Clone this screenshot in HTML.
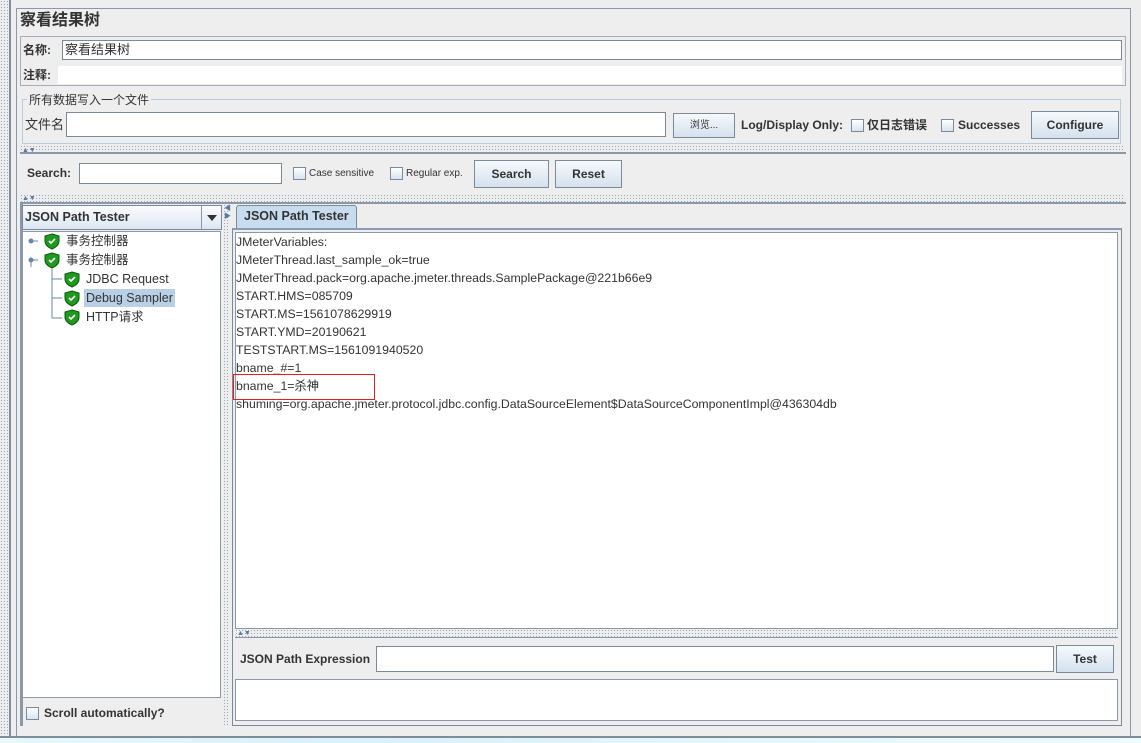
<!DOCTYPE html><html><head><meta charset="utf-8"><style>
*{box-sizing:border-box}
body{margin:0;width:1141px;height:743px;background:#eeeeee;position:relative;overflow:hidden;font-family:"Liberation Sans","Noto Sans CJK SC",sans-serif;font-size:12px;color:#333;line-height:15px}
.a{position:absolute}
.in{position:absolute;background:#fff;border:1px solid #7a8a99}
.btn{position:absolute;border:1px solid #7a8a99;background:linear-gradient(#f6f9fc,#d4e1ee);font-weight:bold;font-size:12px;text-align:center;color:#333}
.cb{position:absolute;width:13px;height:13px;border:1px solid #7a8a99;background:linear-gradient(#fff,#d8e4f0)}
.dots{position:absolute;background-image:radial-gradient(#9aa8b8 0.6px,transparent 0.8px);background-size:3px 3px}
.b{font-weight:bold}
.ln{position:absolute;left:236px;font-size:12.3px;color:#333}
</style></head><body>
<div class="dots" style="left:0;top:0;width:8px;height:743px"></div>
<div class="a" style="left:9px;top:0;width:2px;height:738px;background:#8090a0"></div>
<div class="a" style="left:16px;top:8px;width:1115px;height:729px;border:1px solid #8a98a8"></div>
<div class="a" style="left:0;top:737px;width:1141px;height:6px;background:linear-gradient(90deg,#e8f8fb,#d8f2f8 30%,#eefafc)"></div>
<div class="a" style="left:0;top:736px;width:1141px;height:2px;background:#7f8c99"></div>
<div class="a b" style="left:20px;top:12px;font-size:16px;line-height:18px;color:#333">察看结果树</div>
<div class="a" style="left:20px;top:36px;width:1106px;height:50px;border:1px solid #aab"></div>
<div class="a b" style="left:23px;top:43px;font-size:12px">名称:</div>
<div class="in" style="left:62px;top:40px;width:1060px;height:20px;padding:1px 2px;font-size:13px;line-height:16px">察看结果树</div>
<div class="a b" style="left:23px;top:68px">注释:</div>
<div class="a" style="left:58px;top:66px;width:1064px;height:18px;background:#fff"></div>
<div class="a" style="left:22px;top:99px;width:1099px;height:45px;border:1px solid #b8cde0"></div>
<div class="a" style="left:27px;top:93px;background:#eee;padding:0 2px;font-size:12px">所有数据写入一个文件</div>
<div class="a" style="left:25px;top:117px;font-size:13px">文件名</div>
<div class="in" style="left:66px;top:112px;width:600px;height:25px"></div>
<div class="btn" style="left:673px;top:113px;width:62px;height:25px;font-weight:normal;font-size:10px;line-height:23px">浏览...</div>
<div class="a b" style="left:741px;top:118px">Log/Display Only:</div>
<div class="cb" style="left:851px;top:119px"></div>
<div class="a b" style="left:867px;top:118px">仅日志错误</div>
<div class="cb" style="left:941px;top:119px"></div>
<div class="a b" style="left:958px;top:118px">Successes</div>
<div class="btn" style="left:1031px;top:111px;width:88px;height:28px;line-height:26px">Configure</div>
<div class="dots" style="left:20px;top:145px;width:1105px;height:7px"></div>
<div class="a" style="left:22px;top:143px;font-size:7px;color:#5a7aa8">▲▼</div>
<div class="a" style="left:20px;top:152px;width:1106px;height:2px;background:#8a98a8"></div>
<div class="a b" style="left:27px;top:166px">Search:</div>
<div class="in" style="left:79px;top:163px;width:203px;height:21px"></div>
<div class="cb" style="left:293px;top:167px"></div>
<div class="a" style="left:309px;top:166px;font-size:10px">Case sensitive</div>
<div class="cb" style="left:390px;top:167px"></div>
<div class="a" style="left:406px;top:166px;font-size:10px">Regular exp.</div>
<div class="btn" style="left:474px;top:160px;width:75px;height:28px;line-height:26px">Search</div>
<div class="btn" style="left:555px;top:160px;width:67px;height:28px;line-height:26px">Reset</div>
<div class="dots" style="left:20px;top:194px;width:1105px;height:8px"></div>
<div class="a" style="left:22px;top:191px;font-size:7px;color:#5a7aa8">▲▼</div>
<div class="a" style="left:20px;top:202px;width:1106px;height:2px;background:#8a98a8"></div>
<div class="a" style="left:20px;top:204px;width:202px;height:522px;border-left:3px solid #8a98a8"></div>
<div class="a" style="left:22px;top:205px;width:200px;height:25px;border:1px solid #7a8a99;background:linear-gradient(#fafcfe,#dde7f1)"></div>
<div class="a b" style="left:25px;top:210px;font-size:12.5px">JSON Path Tester</div>
<div class="a" style="left:201px;top:206px;width:1px;height:23px;background:#8a98a8"></div>
<div class="a" style="left:207px;top:215px;border-left:5px solid transparent;border-right:5px solid transparent;border-top:6px solid #333"></div>
<div class="a" style="left:22px;top:231px;width:199px;height:467px;background:#fff;border:1px solid #8a98a8"></div>
<svg class="a" style="left:22px;top:231px" width="200" height="100">
<g stroke="#6a85b0" fill="none"><line x1="11" y1="10" x2="16" y2="10"/><circle cx="9" cy="10" r="2" fill="#6a85b0"/><line x1="11" y1="29" x2="16" y2="29"/><circle cx="9" cy="29" r="2" fill="#6a85b0"/><line x1="9" y1="31" x2="9" y2="36"/>
<line x1="30" y1="38" x2="30" y2="87"/><line x1="30" y1="48" x2="40" y2="48"/><line x1="30" y1="67" x2="40" y2="67"/><line x1="30" y1="87" x2="40" y2="87"/></g>
<g fill="#1f9a1f" stroke="#0a5a0a"><path d="M30 3 l7 2 v5 q0 5 -7 8 q-7 -3 -7 -8 v-5z"/><path d="M30 22 l7 2 v5 q0 5 -7 8 q-7 -3 -7 -8 v-5z"/><path d="M50 41 l7 2 v5 q0 5 -7 8 q-7 -3 -7 -8 v-5z"/><path d="M50 60 l7 2 v5 q0 5 -7 8 q-7 -3 -7 -8 v-5z"/><path d="M50 79 l7 2 v5 q0 5 -7 8 q-7 -3 -7 -8 v-5z"/></g>
<g stroke="#fff" stroke-width="1.6" fill="none"><path d="M27 10 l2 2 l4 -4"/><path d="M27 29 l2 2 l4 -4"/><path d="M47 48 l2 2 l4 -4"/><path d="M47 67 l2 2 l4 -4"/><path d="M47 86 l2 2 l4 -4"/></g>
</svg>
<div class="a" style="left:66px;top:234px;font-size:12.5px">事务控制器</div>
<div class="a" style="left:66px;top:253px;font-size:12.5px">事务控制器</div>
<div class="a" style="left:86px;top:272px;font-size:12.5px">JDBC Request</div>
<div class="a" style="left:84px;top:289px;width:91px;height:18px;background:#b8cfe5"></div>
<div class="a" style="left:86px;top:291px;font-size:12.5px">Debug Sampler</div>
<div class="a" style="left:86px;top:310px;font-size:12.5px">HTTP请求</div>
<div class="cb" style="left:26px;top:707px"></div>
<div class="a b" style="left:44px;top:706px">Scroll automatically?</div>
<div class="dots" style="left:223px;top:204px;width:7px;height:522px"></div>
<div class="a" style="left:224px;top:205px;font-size:7px;color:#5a7aa8;line-height:8px">◀<br>▶</div>
<div class="a" style="left:236px;top:205px;width:121px;height:24px;border:1px solid #7a8a99;border-bottom:none;background:#c8dcef;border-radius:3px 3px 0 0"></div>
<div class="a b" style="left:244px;top:209px;font-size:12.5px">JSON Path Tester</div>
<div class="a" style="left:232px;top:228px;width:890px;height:498px;border:1px solid #7a8a99;border-top:2px solid #8a9cb4"></div>
<div class="a" style="left:235px;top:232px;width:883px;height:397px;background:#fff;border:1px solid #8a98a8"></div>
<div class="ln" style="top:235px">JMeterVariables:</div>
<div class="ln" style="top:253px">JMeterThread.last_sample_ok=true</div>
<div class="ln" style="top:271px">JMeterThread.pack=org.apache.jmeter.threads.SamplePackage@221b66e9</div>
<div class="ln" style="top:289px">START.HMS=085709</div>
<div class="ln" style="top:307px">START.MS=1561078629919</div>
<div class="ln" style="top:325px">START.YMD=20190621</div>
<div class="ln" style="top:343px">TESTSTART.MS=1561091940520</div>
<div class="ln" style="top:361px">bname_#=1</div>
<div class="ln" style="top:379px">bname_1=杀神</div>
<div class="ln" style="top:397px">shuming=org.apache.jmeter.protocol.jdbc.config.DataSourceElement$DataSourceComponentImpl@436304db</div>
<div class="a" style="left:233px;top:374px;width:142px;height:26px;border:1px solid #e02020"></div>
<div class="dots" style="left:235px;top:629px;width:883px;height:8px"></div>
<div class="a" style="left:237px;top:626px;font-size:7px;color:#5a7aa8">▲▼</div>
<div class="a" style="left:235px;top:637px;width:883px;height:1px;background:#8a98a8"></div>
<div class="a b" style="left:240px;top:652px">JSON Path Expression</div>
<div class="in" style="left:376px;top:646px;width:678px;height:26px"></div>
<div class="btn" style="left:1056px;top:645px;width:58px;height:28px;line-height:26px">Test</div>
<div class="a" style="left:235px;top:679px;width:883px;height:42px;background:#fff;border:1px solid #8a98a8"></div>
</body></html>
